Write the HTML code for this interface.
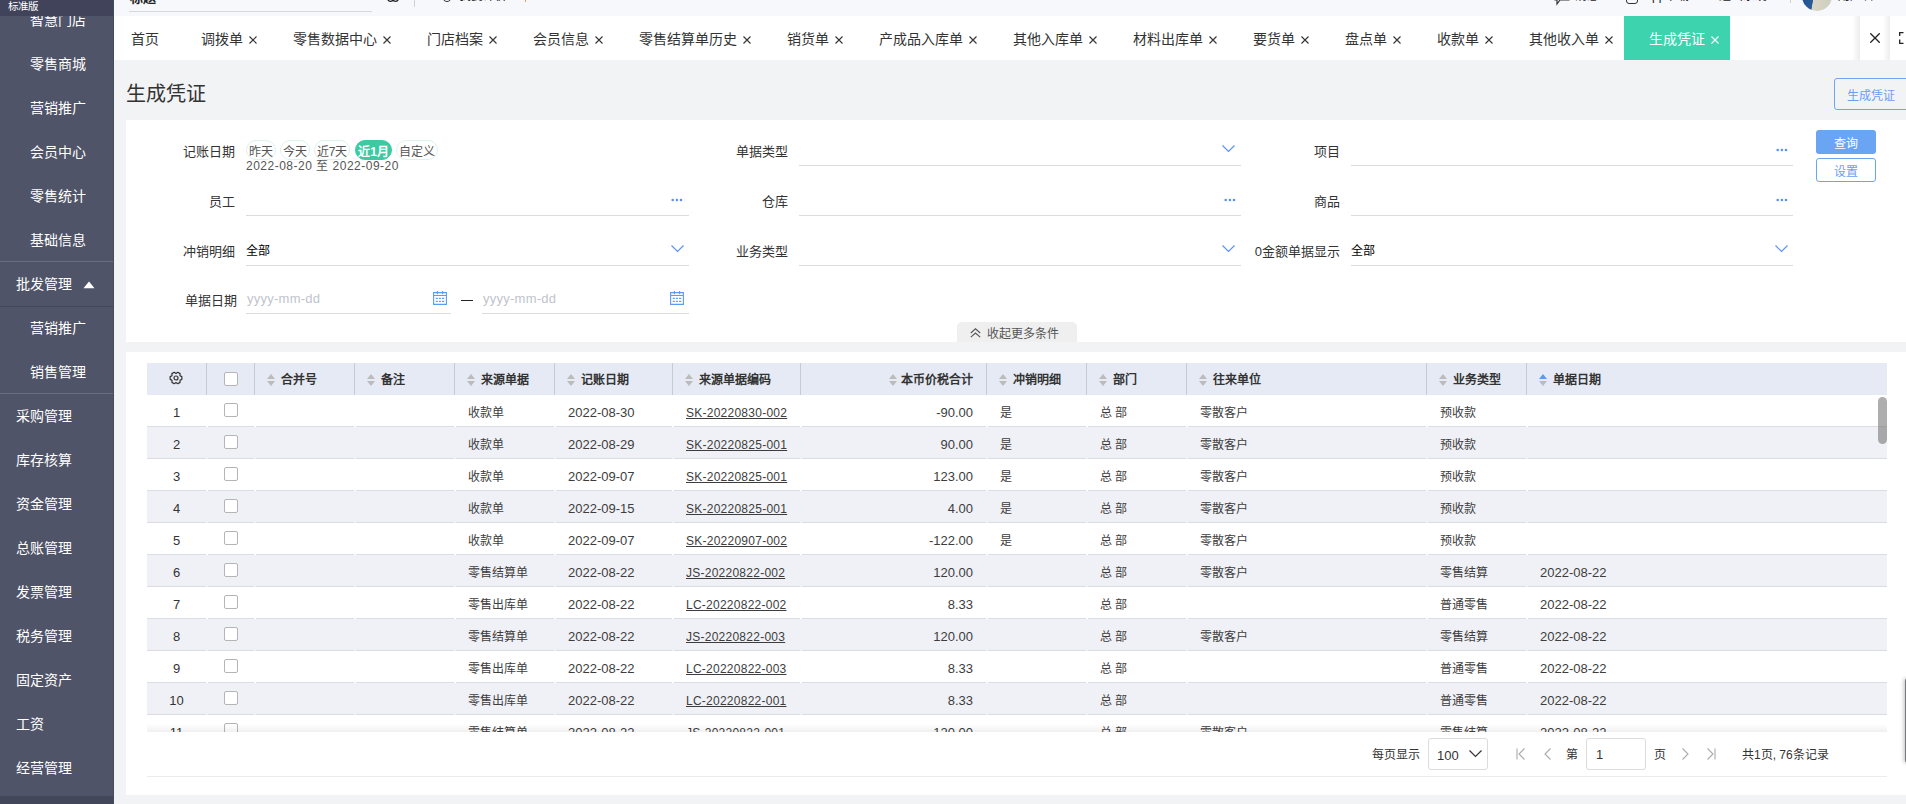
<!DOCTYPE html>
<html lang="zh-CN">
<head>
<meta charset="utf-8">
<style>
*{margin:0;padding:0;box-sizing:border-box}
html,body{width:1906px;height:804px;overflow:hidden;background:#f2f3f5;font-family:"Liberation Sans",sans-serif;color:#333}
.abs{position:absolute}
#sb{position:absolute;left:0;top:0;width:114px;height:804px;background:#4f5468;border-right:1px solid #474b5e}
#sb .top{position:absolute;z-index:2;left:0;top:0;width:113px;height:16px;background:#40435a;color:#fff;font-size:10.5px;line-height:12px;padding-left:8px;overflow:hidden}
#sb .top span{position:relative;top:0px}
#sb .bot{position:absolute;left:0;top:796px;width:113px;height:8px;background:#43475a}
.sbi{position:absolute;color:#fff;font-size:14px;line-height:20px;white-space:nowrap}
.sbline{position:absolute;left:0;width:113px;height:1px;background:#62667a}
#hdr{position:absolute;left:114px;top:0;width:1792px;height:16px;background:#f7f8fc;overflow:hidden}
#tabs{position:absolute;left:114px;top:16px;width:1792px;height:44px;background:#fff}
.tab{position:absolute;top:1px;height:44px;line-height:44px;font-size:14px;color:#333;white-space:nowrap}
.tab .tx{display:inline-block;margin-left:6px;width:8px;height:8px;position:relative;top:0px}
.x{position:absolute}
#title{position:absolute;left:126px;top:81px;font-size:20px;line-height:26px;color:#333}
.btn{position:absolute;font-size:12px;text-align:center;border-radius:3px}
#filt{position:absolute;left:126px;top:120px;width:1780px;height:222px;background:#fff}
.lbl{position:absolute;width:120px;font-size:13px;line-height:16px;color:#333;text-align:right;white-space:nowrap}
.inp{position:absolute;height:1px;background:#dcdcdc}
.val{position:absolute;font-size:12px;line-height:16px;color:#000}
.pill{position:absolute;top:20px;height:20px;line-height:22px;font-size:12px;border:1px solid #dcf3ed;border-radius:10px;color:#555;text-align:center}
.pill.on{background:#3ccaa2;border-color:#3ccaa2;color:#fff;font-weight:bold}
#tbl{position:absolute;left:126px;top:352px;width:1780px;height:443px;background:#fff}
#grid{position:absolute;left:21px;top:11px;width:1740px;height:369px;overflow:hidden}
.hrow{position:absolute;left:0;top:0;width:1740px;height:32px;background:#e6eaf4}
.hc{position:absolute;top:0;height:32px}
.hc.sep{border-left:1px solid #c9cbd2}
.ht{position:absolute;top:9px;font-size:12px;line-height:16px;font-weight:bold;color:#333;white-space:nowrap}
.sort{position:absolute;top:11px;width:8px;height:12px}
.sort:before{content:"";position:absolute;left:0;top:0;border-left:4px solid transparent;border-right:4px solid transparent;border-bottom:5px solid #bbb}
.sort:after{content:"";position:absolute;left:0;top:7px;border-left:4px solid transparent;border-right:4px solid transparent;border-top:5px solid #bbb}
.sort.act:before{border-bottom-color:#5a9bf2}
.gear{position:absolute;left:21.3px;top:7.4px}
.cb{position:absolute;width:14px;height:14px;border:1px solid #b5b5b5;border-radius:2px;background:#fff}
.row{position:absolute;left:0;width:1740px;height:32px;background:#fff}
.row.odd{background:#f0f1f6}
.c{position:absolute;top:0;height:32px}
.c:after{content:"";position:absolute;left:2px;right:0;bottom:0;height:1px;background:#dcdde2}
.c.num:after{left:0}
.t{position:absolute;left:14px;top:10px;font-size:12px;line-height:16px;color:#3d3d3d;white-space:nowrap}
.t.d{font-size:13px}
.t.lk{text-decoration:underline;font-size:12px;letter-spacing:0.25px}
.num{text-align:center;font-size:13px;line-height:16px;padding-top:10px;color:#333}
#shadow{position:absolute;left:21px;top:372px;width:1740px;height:8px}
#pager{position:absolute;left:21px;top:380px;width:1740px;height:45px;border-bottom:1px solid #ececec}
.pt{position:absolute;font-size:12px;line-height:16px;margin-top:1px;color:#333;white-space:nowrap}
</style>
</head>
<body>
<div id="sb">
  <div class="top"><span>标准版</span></div>
<div class="sbi" style="top:9.8px;left:30px">智慧门店</div>
<div class="sbi" style="top:53.8px;left:30px">零售商城</div>
<div class="sbi" style="top:97.8px;left:30px">营销推广</div>
<div class="sbi" style="top:141.8px;left:30px">会员中心</div>
<div class="sbi" style="top:185.8px;left:30px">零售统计</div>
<div class="sbi" style="top:229.8px;left:30px">基础信息</div>
<div class="sbi" style="top:273.8px;left:16px">批发管理</div>
<div class="sbi" style="top:318.3px;left:30px">营销推广</div>
<div class="sbi" style="top:361.8px;left:30px">销售管理</div>
<div class="sbi" style="top:405.8px;left:16px">采购管理</div>
<div class="sbi" style="top:449.8px;left:16px">库存核算</div>
<div class="sbi" style="top:493.8px;left:16px">资金管理</div>
<div class="sbi" style="top:537.8px;left:16px">总账管理</div>
<div class="sbi" style="top:581.8px;left:16px">发票管理</div>
<div class="sbi" style="top:625.8px;left:16px">税务管理</div>
<div class="sbi" style="top:669.8px;left:16px">固定资产</div>
<div class="sbi" style="top:713.8px;left:16px">工资</div>
<div class="sbi" style="top:757.8px;left:16px">经营管理</div>
  <div class="sbline" style="top:261px;background:#6b6e81"></div>
  <div class="sbline" style="top:306px;background:#43475a"></div>
  <div class="sbline" style="top:393px;background:#6b6e81"></div>
  <svg class="abs" style="left:82.5px;top:281px" width="12" height="8" viewBox="0 0 12 8"><path d="M0.5 7.3 L6 0.6 L11.5 7.3 Z" fill="#fff"/></svg>
  <div class="bot"></div>
</div>

<div id="hdr">
  <div class="abs" style="left:15px;top:11px;width:243px;height:1px;background:#d8d8d8"></div>
  <div class="abs" style="left:16px;top:-13.5px;font-size:13px;font-weight:bold;color:#222">标题</div>
  <svg class="abs" style="left:273px;top:-6px" width="12" height="9" viewBox="0 0 12 9"><circle cx="3.5" cy="4.5" r="2.8" fill="none" stroke="#222" stroke-width="1.3"/><circle cx="8.5" cy="4.5" r="2.8" fill="none" stroke="#222" stroke-width="1.3"/></svg>
  <div class="abs" style="left:300px;top:0;width:1px;height:7px;background:#d0d0d0"></div>
  <div class="abs" style="left:328px;top:-8px;width:10px;height:10px;border:1.3px solid #333;border-radius:50%"></div>
  <div class="abs" style="left:345px;top:-14px;font-size:12px;color:#222;white-space:nowrap">我要评价</div>
  <div class="abs" style="left:411px;top:0;width:1px;height:2px;background:#e0a050"></div>
  <svg class="abs" style="left:1440px;top:-8px" width="16" height="14" viewBox="0 0 16 14"><path d="M1 1 H15 V8 H6 L3 12 V8 H1 Z" fill="none" stroke="#333" stroke-width="1.2"/></svg>
  <div class="abs" style="left:1461px;top:-14px;font-size:12px;color:#222;white-space:nowrap">消息</div>
  <div class="abs" style="left:1512px;top:-8px;width:12px;height:12px;border:1.3px solid #333;border-radius:3px"></div>
  <div class="abs" style="left:1530px;top:-14px;font-size:12px;color:#222;white-space:nowrap">App下载</div>
  <div class="abs" style="left:1598px;top:-14px;font-size:12px;color:#222;white-space:nowrap">· 退出系统</div>
  <div class="abs" style="left:1676px;top:0;width:1px;height:3px;background:#d0d0d0"></div>
  <div class="abs" style="left:1688px;top:-19px;width:30px;height:30px;border-radius:50%;background:linear-gradient(100deg,#1f4f8c 0%,#2a5d9a 40%,#d8d6c6 42%,#cfcdbd 100%)"></div>
  <div class="abs" style="left:1724px;top:-14px;font-size:12px;color:#222;white-space:nowrap">用户名 ▾</div>
</div>

<div id="tabs">
<div class="tab" style="left:17px">首页</div>
<div class="tab" style="left:87px">调拨单<svg class="tx" viewBox="0 0 8 8"><path d="M0.5 0.5 L7.5 7.5 M7.5 0.5 L0.5 7.5" stroke="#333" stroke-width="1.1"/></svg></div>
<div class="tab" style="left:179px">零售数据中心<svg class="tx" viewBox="0 0 8 8"><path d="M0.5 0.5 L7.5 7.5 M7.5 0.5 L0.5 7.5" stroke="#333" stroke-width="1.1"/></svg></div>
<div class="tab" style="left:313px">门店档案<svg class="tx" viewBox="0 0 8 8"><path d="M0.5 0.5 L7.5 7.5 M7.5 0.5 L0.5 7.5" stroke="#333" stroke-width="1.1"/></svg></div>
<div class="tab" style="left:419px">会员信息<svg class="tx" viewBox="0 0 8 8"><path d="M0.5 0.5 L7.5 7.5 M7.5 0.5 L0.5 7.5" stroke="#333" stroke-width="1.1"/></svg></div>
<div class="tab" style="left:525px">零售结算单历史<svg class="tx" viewBox="0 0 8 8"><path d="M0.5 0.5 L7.5 7.5 M7.5 0.5 L0.5 7.5" stroke="#333" stroke-width="1.1"/></svg></div>
<div class="tab" style="left:673px">销货单<svg class="tx" viewBox="0 0 8 8"><path d="M0.5 0.5 L7.5 7.5 M7.5 0.5 L0.5 7.5" stroke="#333" stroke-width="1.1"/></svg></div>
<div class="tab" style="left:765px">产成品入库单<svg class="tx" viewBox="0 0 8 8"><path d="M0.5 0.5 L7.5 7.5 M7.5 0.5 L0.5 7.5" stroke="#333" stroke-width="1.1"/></svg></div>
<div class="tab" style="left:899px">其他入库单<svg class="tx" viewBox="0 0 8 8"><path d="M0.5 0.5 L7.5 7.5 M7.5 0.5 L0.5 7.5" stroke="#333" stroke-width="1.1"/></svg></div>
<div class="tab" style="left:1019px">材料出库单<svg class="tx" viewBox="0 0 8 8"><path d="M0.5 0.5 L7.5 7.5 M7.5 0.5 L0.5 7.5" stroke="#333" stroke-width="1.1"/></svg></div>
<div class="tab" style="left:1139px">要货单<svg class="tx" viewBox="0 0 8 8"><path d="M0.5 0.5 L7.5 7.5 M7.5 0.5 L0.5 7.5" stroke="#333" stroke-width="1.1"/></svg></div>
<div class="tab" style="left:1231px">盘点单<svg class="tx" viewBox="0 0 8 8"><path d="M0.5 0.5 L7.5 7.5 M7.5 0.5 L0.5 7.5" stroke="#333" stroke-width="1.1"/></svg></div>
<div class="tab" style="left:1323px">收款单<svg class="tx" viewBox="0 0 8 8"><path d="M0.5 0.5 L7.5 7.5 M7.5 0.5 L0.5 7.5" stroke="#333" stroke-width="1.1"/></svg></div>
<div class="tab" style="left:1415px">其他收入单<svg class="tx" viewBox="0 0 8 8"><path d="M0.5 0.5 L7.5 7.5 M7.5 0.5 L0.5 7.5" stroke="#333" stroke-width="1.1"/></svg></div>
  <div class="abs" style="left:1510px;top:0;width:106px;height:44px;background:#3dd3ae"></div>
  <div class="tab" style="left:1535px;color:#fff">生成凭证<svg class="tx" viewBox="0 0 8 8"><path d="M0.5 0.5 L7.5 7.5 M7.5 0.5 L0.5 7.5" stroke="#fff" stroke-width="1.1"/></svg></div>
  <div class="abs" style="left:1738px;top:0;width:8px;height:44px;background:linear-gradient(to right,rgba(0,0,0,0),rgba(0,0,0,0.07))"></div>
  <div class="abs" style="left:1746px;top:0;width:30px;height:44px;background:#fff"></div>
  <svg class="abs" style="left:1756px;top:17px" width="10" height="10" viewBox="0 0 10 10"><path d="M0.3 0.3 L9.7 9.7 M9.7 0.3 L0.3 9.7" stroke="#222" stroke-width="1.3"/></svg>
  <div class="abs" style="left:1769px;top:0;width:7px;height:44px;background:linear-gradient(to right,rgba(0,0,0,0),rgba(0,0,0,0.07))"></div>
  <div class="abs" style="left:1776px;top:0;width:16px;height:44px;background:#fff"></div>
  <svg class="abs" style="left:1785px;top:16px" width="7" height="12" viewBox="0 0 7 12"><path d="M4.5 0.7 L0.7 0.7 L0.7 4 M0.7 7.5 L0.7 11.3 L4.5 11.3" stroke="#222" stroke-width="1.3" fill="none"/></svg>
</div>

<div id="title">生成凭证</div>
<div class="btn" style="left:1834px;top:78px;width:80px;height:32px;border:1px solid #6ea5f5;line-height:34px;color:#6c9ef0;text-align:left;padding-left:12px;background:#f2f3f5">生成凭证</div>

<div id="filt">
  <div class="lbl" style="left:-11.5px;top:24px">记账日期</div>
  <div class="pill" style="left:120px;width:30px">昨天</div>
  <div class="pill" style="left:154px;width:30px">今天</div>
  <div class="pill" style="left:188px;width:36px">近7天</div>
  <div class="pill on" style="left:229px;width:37px">近1月</div>
  <div class="pill" style="left:270px;width:42px">自定义</div>
  <div class="val" style="left:120px;top:38px;color:#555;font-size:12px;letter-spacing:0.5px">2022-08-20 至 2022-09-20</div>

  <div class="lbl" style="left:541.5px;top:24px">单据类型</div>
  <div class="inp" style="left:673px;top:45px;width:442px"></div>
  <svg class="abs" style="left:1096px;top:25px" width="13" height="8" viewBox="0 0 13 8"><path d="M0.5 0.5 L6.5 6.5 L12.5 0.5" stroke="#5b93f0" stroke-width="1.2" fill="none"/></svg>

  <div class="lbl" style="left:1094px;top:24px">项目</div>
  <div class="inp" style="left:1225px;top:45px;width:442px"></div>
  <svg class="abs" style="left:1650.4px;top:27.7px" width="12" height="4" viewBox="0 0 12 4"><circle cx="1.7" cy="2" r="1.3" fill="#5b93f0"/><circle cx="5.9" cy="2" r="1.3" fill="#5b93f0"/><circle cx="10.0" cy="2" r="1.3" fill="#5b93f0"/></svg>

  <div class="lbl" style="left:-11.5px;top:74px">员工</div>
  <div class="inp" style="left:120px;top:95px;width:443px"></div>
  <svg class="abs" style="left:545.4px;top:77.7px" width="12" height="4" viewBox="0 0 12 4"><circle cx="1.7" cy="2" r="1.3" fill="#5b93f0"/><circle cx="5.9" cy="2" r="1.3" fill="#5b93f0"/><circle cx="10.0" cy="2" r="1.3" fill="#5b93f0"/></svg>

  <div class="lbl" style="left:541.5px;top:74px">仓库</div>
  <div class="inp" style="left:673px;top:95px;width:442px"></div>
  <svg class="abs" style="left:1097.9px;top:77.7px" width="12" height="4" viewBox="0 0 12 4"><circle cx="1.7" cy="2" r="1.3" fill="#5b93f0"/><circle cx="5.9" cy="2" r="1.3" fill="#5b93f0"/><circle cx="10.0" cy="2" r="1.3" fill="#5b93f0"/></svg>

  <div class="lbl" style="left:1094px;top:74px">商品</div>
  <div class="inp" style="left:1225px;top:95px;width:442px"></div>
  <svg class="abs" style="left:1650.4px;top:77.7px" width="12" height="4" viewBox="0 0 12 4"><circle cx="1.7" cy="2" r="1.3" fill="#5b93f0"/><circle cx="5.9" cy="2" r="1.3" fill="#5b93f0"/><circle cx="10.0" cy="2" r="1.3" fill="#5b93f0"/></svg>

  <div class="lbl" style="left:-11.5px;top:124px">冲销明细</div>
  <div class="val" style="left:120px;top:123px">全部</div>
  <div class="inp" style="left:120px;top:145px;width:443px"></div>
  <svg class="abs" style="left:545px;top:125px" width="13" height="8" viewBox="0 0 13 8"><path d="M0.5 0.5 L6.5 6.5 L12.5 0.5" stroke="#5b93f0" stroke-width="1.2" fill="none"/></svg>

  <div class="lbl" style="left:541.5px;top:124px">业务类型</div>
  <div class="inp" style="left:673px;top:145px;width:442px"></div>
  <svg class="abs" style="left:1096px;top:125px" width="13" height="8" viewBox="0 0 13 8"><path d="M0.5 0.5 L6.5 6.5 L12.5 0.5" stroke="#5b93f0" stroke-width="1.2" fill="none"/></svg>

  <div class="lbl" style="left:1094px;top:124px">0金额单据显示</div>
  <div class="val" style="left:1225px;top:123px">全部</div>
  <div class="inp" style="left:1225px;top:145px;width:442px"></div>
  <svg class="abs" style="left:1649px;top:125px" width="13" height="8" viewBox="0 0 13 8"><path d="M0.5 0.5 L6.5 6.5 L12.5 0.5" stroke="#5b93f0" stroke-width="1.2" fill="none"/></svg>

  <div class="lbl" style="left:-9.5px;top:173px">单据日期</div>
  <div class="val" style="left:121px;top:171px;color:#c0c4cc;font-size:13px;letter-spacing:0.25px">yyyy-mm-dd</div>
  <div class="inp" style="left:120px;top:193px;width:205px"></div>
  <svg class="abs" style="left:307px;top:171px" width="14" height="14" viewBox="0 0 14 14"><path d="M0.6 1.6 H13.4 V13.4 H0.6 Z M0.6 4.5 H13.4" stroke="#5b9af5" stroke-width="1.1" fill="none"/><path d="M4.4 0 V3.2 M9.6 0 V3.2" stroke="#5b9af5" stroke-width="1.1"/><path d="M2.8 7.4 H4.8 M5.9 7.4 H7.9 M9 7.4 H11.2 M2.8 10.4 H4.8 M5.9 10.4 H7.9 M9 10.4 H11.2" stroke="#5b9af5" stroke-width="1.1"/></svg>
  <div class="abs" style="left:335px;top:180px;width:12px;height:1px;background:#222"></div>
  <div class="val" style="left:357px;top:171px;color:#c0c4cc;font-size:13px;letter-spacing:0.25px">yyyy-mm-dd</div>
  <div class="inp" style="left:356px;top:193px;width:207px"></div>
  <svg class="abs" style="left:544px;top:171px" width="14" height="14" viewBox="0 0 14 14"><path d="M0.6 1.6 H13.4 V13.4 H0.6 Z M0.6 4.5 H13.4" stroke="#5b9af5" stroke-width="1.1" fill="none"/><path d="M4.4 0 V3.2 M9.6 0 V3.2" stroke="#5b9af5" stroke-width="1.1"/><path d="M2.8 7.4 H4.8 M5.9 7.4 H7.9 M9 7.4 H11.2 M2.8 10.4 H4.8 M5.9 10.4 H7.9 M9 10.4 H11.2" stroke="#5b9af5" stroke-width="1.1"/></svg>

  <div class="btn" style="left:1690px;top:10px;width:60px;height:24px;background:#6aa5f4;color:#fff;line-height:28px">查询</div>
  <div class="btn" style="left:1690px;top:38px;width:60px;height:24px;border:1px solid #6aa5f4;color:#6c9ef0;line-height:26px;background:#fff">设置</div>

  <div class="abs" style="left:831px;top:202px;width:120px;height:20px;background:#efefef;border-radius:5px 5px 0 0"></div>
  <svg class="abs" style="left:844px;top:208px" width="11" height="10" viewBox="0 0 11 10"><path d="M0.8 5 L5.5 0.8 L10.2 5 M0.8 9.2 L5.5 5 L10.2 9.2" stroke="#555" stroke-width="1.1" fill="none"/></svg>
  <div class="pt" style="left:861px;top:204.5px;color:#555">收起更多条件</div>
</div>

<div id="tbl">
  <div id="grid">
    <div class="hrow">
<div class="hc" style="left:0px;width:59px"><svg class="gear" width="16" height="16" viewBox="0 0 16 16"><path d="M13.85 9.35 L13.85 6.65 L11.98 5.70 L12.09 3.61 L9.75 2.26 L8.00 3.40 L6.25 2.26 L3.91 3.61 L4.02 5.70 L2.15 6.65 L2.15 9.35 L4.02 10.30 L3.91 12.39 L6.25 13.74 L8.00 12.60 L9.75 13.74 L12.09 12.39 L11.98 10.30 Z" fill="none" stroke="#333" stroke-width="1.2" stroke-linejoin="round"/><circle cx="8" cy="8" r="2.0" fill="none" stroke="#333" stroke-width="1.2"/></svg></div>
<div class="hc sep" style="left:59px;width:48px"><span class="cb" style="left:17px;top:9px"></span></div>
<div class="hc sep" style="left:107px;width:100px"><span class="sort" style="left:12px"></span><span class="ht" style="left:26px">合并号</span></div>
<div class="hc sep" style="left:207px;width:100px"><span class="sort" style="left:12px"></span><span class="ht" style="left:26px">备注</span></div>
<div class="hc sep" style="left:307px;width:100px"><span class="sort" style="left:12px"></span><span class="ht" style="left:26px">来源单据</span></div>
<div class="hc sep" style="left:407px;width:118px"><span class="sort" style="left:12px"></span><span class="ht" style="left:26px">记账日期</span></div>
<div class="hc sep" style="left:525px;width:128px"><span class="sort" style="left:12px"></span><span class="ht" style="left:26px">来源单据编码</span></div>
<div class="hc sep" style="left:653px;width:186px"><span class="ht" style="right:13px">本币价税合计</span><span class="sort" style="left:88px"></span></div>
<div class="hc sep" style="left:839px;width:100px"><span class="sort" style="left:12px"></span><span class="ht" style="left:26px">冲销明细</span></div>
<div class="hc sep" style="left:939px;width:100px"><span class="sort" style="left:12px"></span><span class="ht" style="left:26px">部门</span></div>
<div class="hc sep" style="left:1039px;width:240px"><span class="sort" style="left:12px"></span><span class="ht" style="left:26px">往来单位</span></div>
<div class="hc sep" style="left:1279px;width:100px"><span class="sort" style="left:12px"></span><span class="ht" style="left:26px">业务类型</span></div>
<div class="hc sep" style="left:1379px;width:361px"><span class="sort act" style="left:12px"></span><span class="ht" style="left:26px">单据日期</span></div>
    </div>
<div class="row" style="top:32px"><div class="c num" style="left:0;width:59px">1</div><div class="c" style="left:59px;width:48px"><span class="cb" style="left:18px;top:8px"></span></div><div class="c" style="left:107px;width:100px"></div><div class="c" style="left:207px;width:100px"></div><div class="c" style="left:307px;width:100px"><span class="t">收款单</span></div><div class="c" style="left:407px;width:118px"><span class="t d">2022-08-30</span></div><div class="c" style="left:525px;width:128px"><span class="t lk">SK-20220830-002</span></div><div class="c" style="left:653px;width:186px"><span class="t d" style="left:auto;right:13px">-90.00</span></div><div class="c" style="left:839px;width:100px"><span class="t">是</span></div><div class="c" style="left:939px;width:100px"><span class="t">总 部</span></div><div class="c" style="left:1039px;width:240px"><span class="t">零散客户</span></div><div class="c" style="left:1279px;width:100px"><span class="t">预收款</span></div><div class="c" style="left:1379px;width:361px"><span class="t d"></span></div></div>
<div class="row odd" style="top:64px"><div class="c num" style="left:0;width:59px">2</div><div class="c" style="left:59px;width:48px"><span class="cb" style="left:18px;top:8px"></span></div><div class="c" style="left:107px;width:100px"></div><div class="c" style="left:207px;width:100px"></div><div class="c" style="left:307px;width:100px"><span class="t">收款单</span></div><div class="c" style="left:407px;width:118px"><span class="t d">2022-08-29</span></div><div class="c" style="left:525px;width:128px"><span class="t lk">SK-20220825-001</span></div><div class="c" style="left:653px;width:186px"><span class="t d" style="left:auto;right:13px">90.00</span></div><div class="c" style="left:839px;width:100px"><span class="t">是</span></div><div class="c" style="left:939px;width:100px"><span class="t">总 部</span></div><div class="c" style="left:1039px;width:240px"><span class="t">零散客户</span></div><div class="c" style="left:1279px;width:100px"><span class="t">预收款</span></div><div class="c" style="left:1379px;width:361px"><span class="t d"></span></div></div>
<div class="row" style="top:96px"><div class="c num" style="left:0;width:59px">3</div><div class="c" style="left:59px;width:48px"><span class="cb" style="left:18px;top:8px"></span></div><div class="c" style="left:107px;width:100px"></div><div class="c" style="left:207px;width:100px"></div><div class="c" style="left:307px;width:100px"><span class="t">收款单</span></div><div class="c" style="left:407px;width:118px"><span class="t d">2022-09-07</span></div><div class="c" style="left:525px;width:128px"><span class="t lk">SK-20220825-001</span></div><div class="c" style="left:653px;width:186px"><span class="t d" style="left:auto;right:13px">123.00</span></div><div class="c" style="left:839px;width:100px"><span class="t">是</span></div><div class="c" style="left:939px;width:100px"><span class="t">总 部</span></div><div class="c" style="left:1039px;width:240px"><span class="t">零散客户</span></div><div class="c" style="left:1279px;width:100px"><span class="t">预收款</span></div><div class="c" style="left:1379px;width:361px"><span class="t d"></span></div></div>
<div class="row odd" style="top:128px"><div class="c num" style="left:0;width:59px">4</div><div class="c" style="left:59px;width:48px"><span class="cb" style="left:18px;top:8px"></span></div><div class="c" style="left:107px;width:100px"></div><div class="c" style="left:207px;width:100px"></div><div class="c" style="left:307px;width:100px"><span class="t">收款单</span></div><div class="c" style="left:407px;width:118px"><span class="t d">2022-09-15</span></div><div class="c" style="left:525px;width:128px"><span class="t lk">SK-20220825-001</span></div><div class="c" style="left:653px;width:186px"><span class="t d" style="left:auto;right:13px">4.00</span></div><div class="c" style="left:839px;width:100px"><span class="t">是</span></div><div class="c" style="left:939px;width:100px"><span class="t">总 部</span></div><div class="c" style="left:1039px;width:240px"><span class="t">零散客户</span></div><div class="c" style="left:1279px;width:100px"><span class="t">预收款</span></div><div class="c" style="left:1379px;width:361px"><span class="t d"></span></div></div>
<div class="row" style="top:160px"><div class="c num" style="left:0;width:59px">5</div><div class="c" style="left:59px;width:48px"><span class="cb" style="left:18px;top:8px"></span></div><div class="c" style="left:107px;width:100px"></div><div class="c" style="left:207px;width:100px"></div><div class="c" style="left:307px;width:100px"><span class="t">收款单</span></div><div class="c" style="left:407px;width:118px"><span class="t d">2022-09-07</span></div><div class="c" style="left:525px;width:128px"><span class="t lk">SK-20220907-002</span></div><div class="c" style="left:653px;width:186px"><span class="t d" style="left:auto;right:13px">-122.00</span></div><div class="c" style="left:839px;width:100px"><span class="t">是</span></div><div class="c" style="left:939px;width:100px"><span class="t">总 部</span></div><div class="c" style="left:1039px;width:240px"><span class="t">零散客户</span></div><div class="c" style="left:1279px;width:100px"><span class="t">预收款</span></div><div class="c" style="left:1379px;width:361px"><span class="t d"></span></div></div>
<div class="row odd" style="top:192px"><div class="c num" style="left:0;width:59px">6</div><div class="c" style="left:59px;width:48px"><span class="cb" style="left:18px;top:8px"></span></div><div class="c" style="left:107px;width:100px"></div><div class="c" style="left:207px;width:100px"></div><div class="c" style="left:307px;width:100px"><span class="t">零售结算单</span></div><div class="c" style="left:407px;width:118px"><span class="t d">2022-08-22</span></div><div class="c" style="left:525px;width:128px"><span class="t lk">JS-20220822-002</span></div><div class="c" style="left:653px;width:186px"><span class="t d" style="left:auto;right:13px">120.00</span></div><div class="c" style="left:839px;width:100px"><span class="t"></span></div><div class="c" style="left:939px;width:100px"><span class="t">总 部</span></div><div class="c" style="left:1039px;width:240px"><span class="t">零散客户</span></div><div class="c" style="left:1279px;width:100px"><span class="t">零售结算</span></div><div class="c" style="left:1379px;width:361px"><span class="t d">2022-08-22</span></div></div>
<div class="row" style="top:224px"><div class="c num" style="left:0;width:59px">7</div><div class="c" style="left:59px;width:48px"><span class="cb" style="left:18px;top:8px"></span></div><div class="c" style="left:107px;width:100px"></div><div class="c" style="left:207px;width:100px"></div><div class="c" style="left:307px;width:100px"><span class="t">零售出库单</span></div><div class="c" style="left:407px;width:118px"><span class="t d">2022-08-22</span></div><div class="c" style="left:525px;width:128px"><span class="t lk">LC-20220822-002</span></div><div class="c" style="left:653px;width:186px"><span class="t d" style="left:auto;right:13px">8.33</span></div><div class="c" style="left:839px;width:100px"><span class="t"></span></div><div class="c" style="left:939px;width:100px"><span class="t">总 部</span></div><div class="c" style="left:1039px;width:240px"><span class="t"></span></div><div class="c" style="left:1279px;width:100px"><span class="t">普通零售</span></div><div class="c" style="left:1379px;width:361px"><span class="t d">2022-08-22</span></div></div>
<div class="row odd" style="top:256px"><div class="c num" style="left:0;width:59px">8</div><div class="c" style="left:59px;width:48px"><span class="cb" style="left:18px;top:8px"></span></div><div class="c" style="left:107px;width:100px"></div><div class="c" style="left:207px;width:100px"></div><div class="c" style="left:307px;width:100px"><span class="t">零售结算单</span></div><div class="c" style="left:407px;width:118px"><span class="t d">2022-08-22</span></div><div class="c" style="left:525px;width:128px"><span class="t lk">JS-20220822-003</span></div><div class="c" style="left:653px;width:186px"><span class="t d" style="left:auto;right:13px">120.00</span></div><div class="c" style="left:839px;width:100px"><span class="t"></span></div><div class="c" style="left:939px;width:100px"><span class="t">总 部</span></div><div class="c" style="left:1039px;width:240px"><span class="t">零散客户</span></div><div class="c" style="left:1279px;width:100px"><span class="t">零售结算</span></div><div class="c" style="left:1379px;width:361px"><span class="t d">2022-08-22</span></div></div>
<div class="row" style="top:288px"><div class="c num" style="left:0;width:59px">9</div><div class="c" style="left:59px;width:48px"><span class="cb" style="left:18px;top:8px"></span></div><div class="c" style="left:107px;width:100px"></div><div class="c" style="left:207px;width:100px"></div><div class="c" style="left:307px;width:100px"><span class="t">零售出库单</span></div><div class="c" style="left:407px;width:118px"><span class="t d">2022-08-22</span></div><div class="c" style="left:525px;width:128px"><span class="t lk">LC-20220822-003</span></div><div class="c" style="left:653px;width:186px"><span class="t d" style="left:auto;right:13px">8.33</span></div><div class="c" style="left:839px;width:100px"><span class="t"></span></div><div class="c" style="left:939px;width:100px"><span class="t">总 部</span></div><div class="c" style="left:1039px;width:240px"><span class="t"></span></div><div class="c" style="left:1279px;width:100px"><span class="t">普通零售</span></div><div class="c" style="left:1379px;width:361px"><span class="t d">2022-08-22</span></div></div>
<div class="row odd" style="top:320px"><div class="c num" style="left:0;width:59px">10</div><div class="c" style="left:59px;width:48px"><span class="cb" style="left:18px;top:8px"></span></div><div class="c" style="left:107px;width:100px"></div><div class="c" style="left:207px;width:100px"></div><div class="c" style="left:307px;width:100px"><span class="t">零售出库单</span></div><div class="c" style="left:407px;width:118px"><span class="t d">2022-08-22</span></div><div class="c" style="left:525px;width:128px"><span class="t lk">LC-20220822-001</span></div><div class="c" style="left:653px;width:186px"><span class="t d" style="left:auto;right:13px">8.33</span></div><div class="c" style="left:839px;width:100px"><span class="t"></span></div><div class="c" style="left:939px;width:100px"><span class="t">总 部</span></div><div class="c" style="left:1039px;width:240px"><span class="t"></span></div><div class="c" style="left:1279px;width:100px"><span class="t">普通零售</span></div><div class="c" style="left:1379px;width:361px"><span class="t d">2022-08-22</span></div></div>
<div class="row" style="top:352px"><div class="c num" style="left:0;width:59px">11</div><div class="c" style="left:59px;width:48px"><span class="cb" style="left:18px;top:8px"></span></div><div class="c" style="left:107px;width:100px"></div><div class="c" style="left:207px;width:100px"></div><div class="c" style="left:307px;width:100px"><span class="t">零售结算单</span></div><div class="c" style="left:407px;width:118px"><span class="t d">2022-08-22</span></div><div class="c" style="left:525px;width:128px"><span class="t lk">JS-20220822-001</span></div><div class="c" style="left:653px;width:186px"><span class="t d" style="left:auto;right:13px">120.00</span></div><div class="c" style="left:839px;width:100px"><span class="t"></span></div><div class="c" style="left:939px;width:100px"><span class="t">总 部</span></div><div class="c" style="left:1039px;width:240px"><span class="t">零散客户</span></div><div class="c" style="left:1279px;width:100px"><span class="t">零售结算</span></div><div class="c" style="left:1379px;width:361px"><span class="t d">2022-08-22</span></div></div>
  </div>
  <div id="shadow" style="background:linear-gradient(to bottom,rgba(0,0,0,0),rgba(0,0,0,0.06))"></div>
  <div class="abs" style="left:1752px;top:45px;width:9px;height:47px;border-radius:5px;background:rgba(120,120,120,0.6)"></div>
  <div id="pager">
    <div class="pt" style="left:1225px;top:14px">每页显示</div>
    <div class="abs" style="left:1281px;top:6px;width:60px;height:32px;border:1px solid #dcdcdc;border-radius:3px"></div>
    <div class="pt" style="left:1290px;top:15px;font-size:13px">100</div>
    <svg class="abs" style="left:1322px;top:18px" width="13" height="8" viewBox="0 0 13 8"><path d="M0.5 0.5 L6.5 6.5 L12.5 0.5" stroke="#333" stroke-width="1.2" fill="none"/></svg>
    <svg class="abs" style="left:1369px;top:16px" width="10" height="12" viewBox="0 0 10 12"><path d="M1 0.5 V11.5 M8.5 0.5 L3 6 L8.5 11.5" stroke="#aaa" stroke-width="1.1" fill="none"/></svg>
    <svg class="abs" style="left:1396px;top:16px" width="9" height="12" viewBox="0 0 9 12"><path d="M7.5 0.5 L2 6 L7.5 11.5" stroke="#aaa" stroke-width="1.1" fill="none"/></svg>
    <div class="pt" style="left:1419px;top:14px">第</div>
    <div class="abs" style="left:1439px;top:6px;width:60px;height:32px;border:1px solid #dcdcdc;border-radius:3px"></div>
    <div class="pt" style="left:1449px;top:14px;font-size:13px">1</div>
    <div class="pt" style="left:1507px;top:14px">页</div>
    <svg class="abs" style="left:1534px;top:16px" width="9" height="12" viewBox="0 0 9 12"><path d="M1.5 0.5 L7 6 L1.5 11.5" stroke="#aaa" stroke-width="1.1" fill="none"/></svg>
    <svg class="abs" style="left:1559px;top:16px" width="10" height="12" viewBox="0 0 10 12"><path d="M9 0.5 V11.5 M1.5 0.5 L7 6 L1.5 11.5" stroke="#aaa" stroke-width="1.1" fill="none"/></svg>
    <div class="pt" style="left:1595px;top:14px">共1页, 76条记录</div>
  </div>
</div>
<div class="abs" style="left:1905px;top:678px;width:6px;height:85px;border-radius:4px;background:#76777d;box-shadow:-1px 0 4px rgba(0,0,0,0.25)"></div>
</body>
</html>
